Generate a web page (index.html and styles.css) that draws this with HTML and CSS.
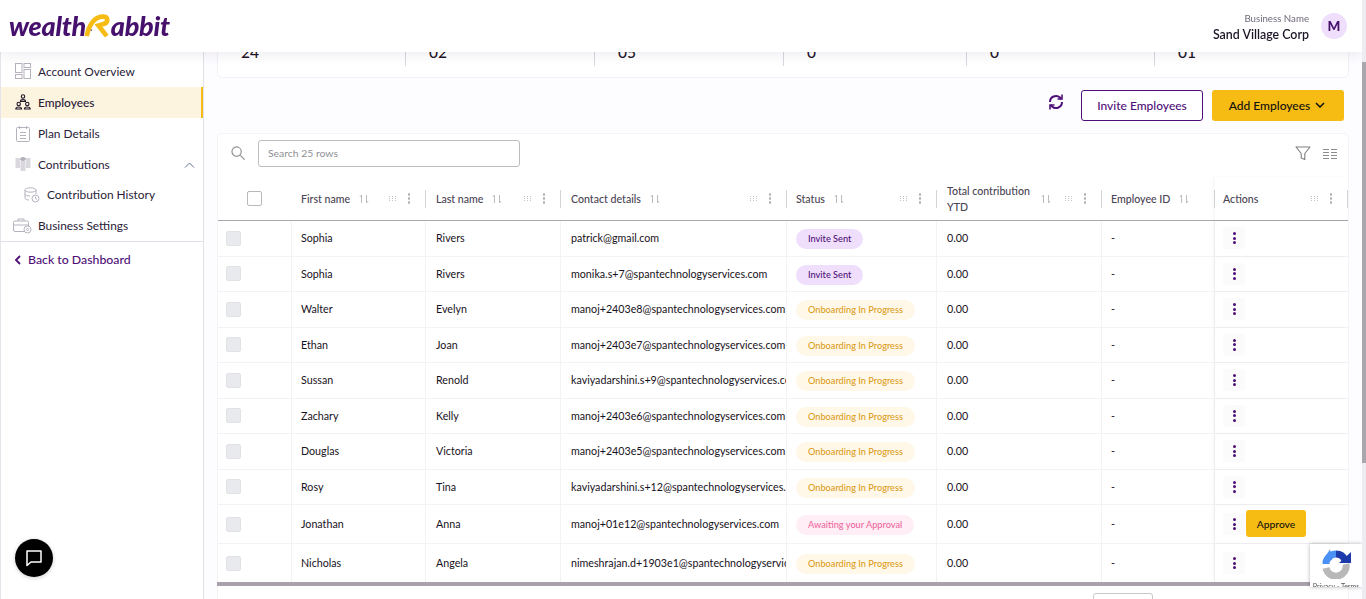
FILE: index.html
```html
<!DOCTYPE html>
<html lang="en">
<head>
<meta charset="utf-8">
<title>Employees</title>
<link rel="stylesheet" href="styles.css">
</head>
<body>
<header class="topbar">
  <div class="logo"><span>wealth</span><svg class="logo-r" width="27" height="24" viewBox="0 0 29 25"><path d="M3 24.500C5 13 11 3.500 20 3.500 C26.500 3.500 26.500 10 21 11.500 L15.500 13 L24.500 24.500" fill="none" stroke="#f6bc14" stroke-width="5"/><circle cx="8" cy="18" r=".8" fill="#1d1526"/></svg><span>abbit</span></div>
  <div class="account">
    <div class="biz"><small>Business Name</small><strong>Sand Village Corp</strong></div>
    <div class="avatar">M</div>
  </div>
</header>
<div class="shell">
<aside class="sidebar">
  <nav class="nav">
    <a class="item lift"><svg width="16" height="16" viewBox="0 0 16 16" fill="none" stroke="#b5b2bd"><rect x=".5" y=".5" width="6.500" height="9"/><rect x="9" y=".5" width="6.500" height="4"/><rect x=".5" y="11.500" width="6.500" height="4"/><rect x="9" y="6.500" width="6.500" height="9"/></svg>Account Overview</a>
    <a class="item lift active"><svg width="16" height="16" viewBox="0 0 16 16" fill="none" stroke="#1d1526" stroke-width="1.100"><circle cx="8" cy="2.500" r="1.700"/><path d="M5.500 7.500c0-2.500 5-2.500 5 0z"/><circle cx="3.700" cy="10" r="1.700"/><path d="M.8 15c0-2.700 5.800-2.700 5.800 0z"/><circle cx="12.300" cy="10" r="1.700"/><path d="M9.400 15c0-2.700 5.800-2.700 5.800 0z"/></svg>Employees</a>
    <a class="item"><svg width="16" height="17" viewBox="0 0 16 17" fill="none" stroke="#b5b2bd"><rect x="1.500" y="2.500" width="13" height="14" rx="1"/><path d="M4.500 1v3M11.500 1v3M5 7.500h6M5 10.500h6M5 13.500h6"/></svg>Plan Details</a>
    <a class="item"><svg width="16" height="15" viewBox="0 0 16 15" fill="none" stroke="#b5b2bd"><path d="M.5 2h4.500M.5 4h4.500M.5 6h4.500M.5 8h4.500M.5 10h4.500M11 2h4.500M11 4h4.500M11 6h4.500M11 8h4.500M11 10h4.500"/><ellipse cx="8" cy="2" rx="2.500" ry="1.500" fill="#b5b2bd"/><path d="M5.500 5h5M5.500 7h5M5.500 9h5M5.500 11h5M5.500 13h5" stroke-width="1.200"/></svg>Contributions<svg class="caret" width="11" height="6" viewBox="0 0 11 6" fill="none" stroke="#5f7391"><path d="M1 5.500 5.500 1 10 5.500"/></svg></a>
    <a class="item lift sub"><svg width="16" height="16" viewBox="0 0 16 16" fill="none" stroke="#b5b2bd"><ellipse cx="6.500" cy="3" rx="5.500" ry="2.200"/><path d="M1 3v8c0 1 2 2 4 2M12 3v4M1 7c0 1 2 2 5 2"/><circle cx="11.500" cy="11.500" r="3.500"/><path d="M11.500 9.500v2l1.500 1"/></svg>Contribution History</a>
    <a class="item biz-set"><svg width="19" height="16" viewBox="0 0 19 16" fill="none" stroke="#b5b2bd"><rect x=".5" y="3" width="15" height="10.500" rx="1.500"/><path d="M5 3V1h6v2M.5 7h15"/><circle cx="14.500" cy="11.500" r="3.500" fill="#fff"/><circle cx="14.500" cy="11.500" r="1"/></svg>Business Settings</a>
  </nav>
  <a class="back"><svg width="7" height="10" viewBox="0 0 7 10" fill="none" stroke="#4f0f78" stroke-width="1.800"><path d="M6 1 2 5l4 4"/></svg>Back to Dashboard</a>
  <button class="chat" aria-label="Chat"><svg width="18" height="18" viewBox="0 0 18 18" fill="none" stroke="#fff" stroke-width="1.500"><path d="M2 2h14v11H6l-4 3.500z" stroke-linejoin="round"/></svg></button>
</aside>
<main class="main">
  <section class="summary">
    <div class="stat">24</div><div class="stat">02</div><div class="stat">05</div><div class="stat">0</div><div class="stat">0</div><div class="stat">01</div>
  </section>
  <div class="toolbar">
    <svg class="sync" width="18" height="18" viewBox="0 0 18 18" fill="none" stroke="#4f0f78" stroke-width="2"><path d="M3 9a6 6 0 0 1 10-4.500l1.500 1.500M15 9a6 6 0 0 1-10 4.500L3.500 12"/><path d="M15 1.500V6h-4.500M3 16.500V12h4.500" stroke-width="1.600"/></svg>
    <button class="btn outline">Invite Employees</button>
    <button class="btn solid">Add Employees<svg width="10" height="6" viewBox="0 0 10 6" fill="none" stroke="#111" stroke-width="1.500"><path d="M1 1l4 4 4-4"/></svg></button>
  </div>
  <section class="panel">
    <div class="panel-tools">
      <svg class="glass" width="14" height="14" viewBox="0 0 15 15" fill="none" stroke="#8c8c8c" stroke-width="1.200"><circle cx="6" cy="6" r="5"/><path d="M10 10l4.500 4.500"/></svg>
      <div class="search">Search 25 rows</div>
      <div class="panel-right">
        <svg width="16" height="15" viewBox="0 0 16 15" fill="none" stroke="#808080" stroke-width="1.100"><path d="M1 1h14L9.800 7.500V13.500L6.200 12V7.500z" stroke-linejoin="round"/></svg>
        <svg width="14" height="12" viewBox="0 0 14 12" fill="none" stroke="#8c8c8c"><path d="M0 1.500h6M8 1.500h6M0 4.500h6M8 4.500h6M0 7.500h6M8 7.500h6M0 10.500h6M8 10.500h6"/></svg>
      </div>
    </div>
    <div class="table" id="table"></div>
    <div class="hscroll"></div>
    <div class="pager"><div class="page-box"></div></div>
  </section>
</main>
</div>
<div class="recaptcha"><svg width="30" height="30" viewBox="0 0 30 30" fill="none" stroke-width="7"><path d="M5 15A10 10 0 0 1 15 5" stroke="#4a90f5"/><path d="M15 5a10 10 0 0 1 9 6" stroke="#1c3aa9"/><path d="M25 15A10 10 0 0 1 5 19" stroke="#b8b8b8"/><path d="M18 14H30V3z" fill="#1c3aa9"/><path d="M10 1v11H0z" fill="#4a90f5" transform="rotate(-10 5 6)"/></svg><span>Privacy - Terms</span></div>
<div class="track"><div class="thumb"></div></div>
<script src="table.js"></script>
</body>
</html>
```

FILE: table.js
```js
var cols = [["First name","c-first"],["Last name","c-last"],["Contact details","c-contact"],["Status","c-status"],["Total contribution YTD","c-total"],["Employee ID","c-id"],["Actions","c-act"]];
var rows = [
["Sophia","Rivers","patrick@gmail.com","i"],
["Sophia","Rivers","monika.s+7@spantechnologyservices.com","i"],
["Walter","Evelyn","manoj+2403e8@spantechnologyservices.com","o"],
["Ethan","Joan","manoj+2403e7@spantechnologyservices.com","o"],
["Sussan","Renold","kaviyadarshini.s+9@spantechnologyservices.com","o"],
["Zachary","Kelly","manoj+2403e6@spantechnologyservices.com","o"],
["Douglas","Victoria","manoj+2403e5@spantechnologyservices.com","o"],
["Rosy","Tina","kaviyadarshini.s+12@spantechnologyservices.com","o"],
["Jonathan","Anna","manoj+01e12@spantechnologyservices.com","a"],
["Nicholas","Angela","nimeshrajan.d+1903e1@spantechnologyservices.com","o"]];
var pills = {i:["Invite Sent","pill-i"],o:["Onboarding In Progress","pill-o"],a:["Awaiting your Approval","pill-a"]};
var sort = '<svg class="sort" width="10" height="10" viewBox="0 0 10 10" fill="none" stroke="#bdbdbd"><path d="M2.500 9V1L.8 3M7.500 1v8l1.700-2"/></svg>';
var menu = '<span class="col-menu"><svg class="grip" width="9" height="5" viewBox="0 0 9 5" fill="#c4c4c4"><path d="M0 0h1v1H0zM3 0h1v1H3zM6 0h1v1H6zM0 2h1v1H0zM3 2h1v1H3zM6 2h1v1H6zM0 4h1v1H0zM3 4h1v1H3zM6 4h1v1H6z"/></svg><i class="dots"><b></b><b></b><b></b></i></span>';
var h = '<div class="row head"><div class="cell c-check"><span class="check big"></span></div>';
cols.forEach(function (c) {
  var noMenu = c[0] === "Employee ID";
  var hasSort = c[0] !== "Actions";
  h += '<div class="cell ' + c[1] + '"><span class="title">' + c[0] + '</span>' + (hasSort ? sort : '') + (noMenu ? '' : menu) + '</div>';
});
h += '</div>';
rows.forEach(function (r) {
  var p = pills[r[3]];
  h += '<div class="row body ' + (r[3] === "a" ? "tall" : "") + '"><div class="cell c-check"><span class="check"></span></div>' +
    '<div class="cell c-first">' + r[0] + '</div><div class="cell c-last">' + r[1] + '</div>' +
    '<div class="cell c-contact"><span class="clip">' + r[2] + '</span></div>' +
    '<div class="cell c-status"><span class="pill ' + p[1] + '">' + p[0] + '</span></div>' +
    '<div class="cell c-total">0.00</div><div class="cell c-id">-</div>' +
    '<div class="cell c-act"><span class="kebab"><i class="dots pur"><b></b><b></b><b></b></i></span>' + (r[3] === "a" ? '<button class="approve">Approve</button>' : '') + '</div></div>';
});
document.getElementById("table").innerHTML = h;
```

FILE: styles.css
```css
* { box-sizing: border-box; }
html, body { margin: 0; height: 599px; overflow: hidden; }
body { font-family: Lato, "Liberation Sans", sans-serif; background: #fdfcff; color: #1d1526; }
button { font-family: inherit; border: 0; cursor: pointer; }
.topbar { position: fixed; top: 0; left: 0; right: 4px; height: 52px; background: #fff; box-shadow: 0 2px 12px rgba(60, 40, 90, .1); display: flex; align-items: center; justify-content: space-between; padding: 0 15px 0 9px; z-index: 5; }
.logo { display: flex; align-items: flex-end; font: italic 900 27px/28px Lato, sans-serif; color: #46106d; letter-spacing: -.3px; height: 28px; }
.logo-r { margin: 0 0 3px -2px; flex: none; }
.account { display: flex; align-items: center; gap: 12px; }
.biz { display: flex; flex-direction: column; align-items: flex-end; line-height: 15px; }
.biz small { font-size: 9.700px; color: #6e6878; }
.biz strong { font-size: 12.400px; font-weight: 600; margin-top: 1px; }
.avatar { width: 26px; height: 26px; border-radius: 50%; background: #efdffd; color: #46106d; font-weight: 900; font-size: 13.500px; display: flex; align-items: center; justify-content: center; }
.shell { display: flex; height: 599px; }
.sidebar { width: 204px; flex: none; background: #fff; border-left: 1px solid #e6e4ea; border-right: 1px solid #e2e0e8; padding-top: 56px; position: relative; }
.nav { border-bottom: 1px solid #e2e0e8; }
.item { display: flex; align-items: center; gap: 7px; height: 31px; padding-left: 14px; font-size: 11.900px; color: #2a2138; }
.item.lift { padding-bottom: 1px; }
.item svg { flex: none; }
.item.active { background: #fcf4df; border-right: 2px solid #f6bc14; font-weight: 500; }
.item.sub { padding-left: 23px; height: 30px; }
.item.biz-set { padding-left: 12px; gap: 6px; }
.item .caret { margin-left: auto; margin-right: 8px; }
.back { display: flex; align-items: center; gap: 7px; height: 35px; padding-left: 13px; font-size: 12.300px; font-weight: 500; color: #4f0f78; }
.chat { position: absolute; left: 14px; bottom: 22px; width: 38px; height: 38px; border-radius: 50%; background: #000; display: flex; align-items: center; justify-content: center; box-shadow: 0 1px 4px rgba(0,0,0,.2); padding: 0; }
.main { flex: 1; min-width: 0; padding: 0 17px 0 12px; overflow: hidden; }
.summary { margin: 0 0 0 1px; height: 78px; background: #fff; border: 1px solid #f2f1f5; border-radius: 5px; display: grid; grid-template-columns: 188px 189px 189px 183px 188px 1fr; align-items: start; padding-top: 39px; }
.stat { height: 26px; font-size: 15.500px; font-weight: 500; padding-left: 23px; border-right: 1px solid #d8d8e0; line-height: 25px; }
.stat:last-child { border-right: 0; }
.toolbar { display: flex; align-items: center; justify-content: flex-end; height: 55px; gap: 9px; padding-right: 5px; }
.sync { margin-right: 7px; margin-top: -8px; }
.btn { height: 31px; border-radius: 3px; font-size: 12px; font-weight: 500; display: inline-flex; align-items: center; justify-content: center; gap: 5px; padding: 0 0 1px; }
.outline { width: 122px; background: #fff; border: 1px solid #4f0f78; color: #4f0f78; }
.solid { width: 132px; background: #f6bc14; color: #111; padding-right: 2px; }
.panel { margin-left: 1px; background: #fff; border: 1px solid #f4f3f7; border-radius: 5px; }
.panel-tools { height: 43px; display: flex; align-items: center; padding: 0 11px 4px 13px; gap: 13px; }
.glass { margin-top: -2px; }
.search { width: 262px; height: 27px; border: 1px solid #bdbdbd; border-radius: 3px; font-size: 10.400px; color: #8f8f94; padding-left: 9px; line-height: 25px; background: #fff; }
.panel-right { margin-left: auto; display: flex; gap: 12px; align-items: center; }
.row { display: flex; height: 35.500px; border-bottom: 1px solid #f3f2f5; font-size: 10.700px; color: #171221; }
.row.tall { height: 39px; }
.row.head { height: 44px; border-bottom: 1px solid #a9a9ad; color: #4a4453; font-weight: 500; font-size: 10.600px; }
.row:last-child { border-bottom: 0; height: 38px; }
.cell { display: flex; align-items: center; padding-left: 9px; border-right: 1px solid #f3f2f5; min-width: 0; position: relative; }
.body .cell { padding-bottom: 1px; }
.c-check { width: 74px; padding-left: 8px; }
.c-first { width: 134px; }
.c-last { width: 135px; padding-left: 10px; }
.c-contact { width: 226px; padding-left: 10px; }
.c-status { width: 150px; }
.c-total { width: 165px; padding-left: 10px; }
.c-id { width: 113px; }
.c-act { width: 133px; border-right: 0; padding-left: 8px; box-shadow: -2px 0 3px rgba(0,0,0,.03); }
.head .cell { border-right: 0; }
.head .cell::after { content: ""; position: absolute; right: 0; top: 13px; height: 18px; width: 1px; background: #d5d5d9; }
.head .c-check::after { display: none; }
.head .c-total .title { width: 85px; line-height: 16px; }
.check { width: 15px; height: 15px; margin-top: 1px; background: #e8eaee; border: 1px solid #e0e2e6; border-radius: 2px; }
.check.big { margin: 0 0 0 21px; background: #fff; border-color: #b8b8bc; }
.sort { margin-left: 9px; flex: none; }
.col-menu { margin-left: auto; margin-right: 16px; display: flex; align-items: center; gap: 10px; flex: none; }
.dots { display: flex; flex-direction: column; gap: 1.500px; font-style: normal; }
.dots b { width: 2.500px; height: 2.500px; border-radius: 50%; background: #b5b5b5; }
.dots.pur b { background: #4f0f78; width: 3px; height: 3px; }
.clip { display: block; width: 215px; white-space: nowrap; overflow: hidden; }
.pill { height: 20px; line-height: 20px; margin-top: 3px; border-radius: 10px; font-size: 9.200px; font-weight: 500; padding: 0 12px; white-space: nowrap; }
.pill-i { background: #efdffd; color: #4f0f78; }
.pill-o { background: #fff8e8; color: #dc9d1c; }
.pill-a { background: #ffeef5; color: #ee6a9f; }
.kebab { width: 22px; height: 22px; margin-top: 1px; border-radius: 3px; background: #fbfbfb; display: flex; align-items: center; justify-content: center; }
.approve { width: 60px; height: 27px; margin-left: 1px; border-radius: 3px; background: #f6bc14; color: #111; font-size: 10.300px; font-weight: 500; padding: 0; }
.hscroll { height: 4px; margin: 0 -1px; background: #a9a2ad; }
.pager { height: 40px; display: flex; justify-content: flex-end; padding: 7px 195px 0 0; }
.page-box { width: 60px; height: 30px; border: 1px solid #c9c9cc; border-radius: 3px; }
.recaptcha { position: fixed; right: 4px; top: 544px; width: 52px; height: 43px; background: #fff; box-shadow: 0 0 4px rgba(0,0,0,.3); display: flex; flex-direction: column; align-items: center; padding-top: 5px; overflow: hidden; z-index: 6; }
.recaptcha svg { flex: none; }
.recaptcha span { font-size: 7px; line-height: 9px; white-space: nowrap; color: #555; margin-top: 3px; flex: none; }
.track { position: fixed; right: 0; top: 0; width: 4px; height: 599px; background: #edecf0; z-index: 7; }
.thumb { margin-top: 62px; height: 401px; background: #aaa6ad; }
```
